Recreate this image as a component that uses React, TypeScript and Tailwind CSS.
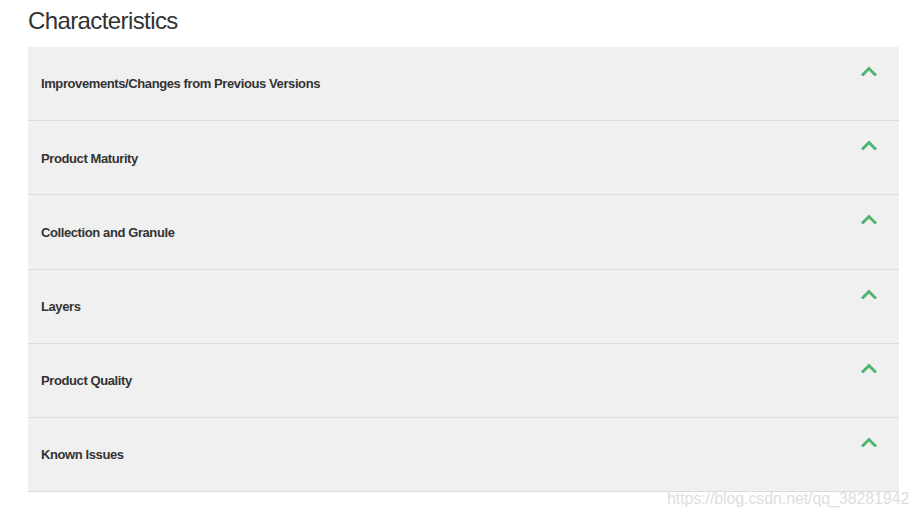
import React from "react";

const items = [
  "Improvements/Changes from Previous Versions",
  "Product Maturity",
  "Collection and Granule",
  "Layers",
  "Product Quality",
  "Known Issues",
];

function Chevron() {
  return (
    <svg width="16" height="10" viewBox="0 0 16 10" className="block">
      <path d="M2 8.5 L8 2.5 L14 8.5" fill="none" stroke="#4fb46d" strokeWidth="3" strokeLinecap="square" />
    </svg>
  );
}

export default function App() {
  return (
    <div className="relative w-[920px] h-[517px] bg-white overflow-hidden" style={{ fontFamily: '"Liberation Sans", Arial, sans-serif' }}>
      <div className="pl-[28px] pr-[21px] pt-[7px]">
        <h2 className="text-[24px] leading-[28px] text-[#333] tracking-[-0.6px] mb-[12px]">Characteristics</h2>
        <div className="bg-[#f0f0f0]">
          {items.map((t) => (
            <div key={t} className="relative h-[74.2px] border-b border-[#dcdcdc] flex items-center pl-[13px]">
              <span className="text-[13px] font-bold text-[#333] tracking-[-0.4px] mt-[1px]">{t}</span>
              <div className="absolute right-[22px] top-[19px]">
                <Chevron />
              </div>
            </div>
          ))}
        </div>
      </div>
      <div className="absolute left-[667px] top-[490px] text-[16px] leading-[18px] text-[#dedede] tracking-[-0.1px]">https://blog.csdn.net/qq_38281942</div>
    </div>
  );
}
